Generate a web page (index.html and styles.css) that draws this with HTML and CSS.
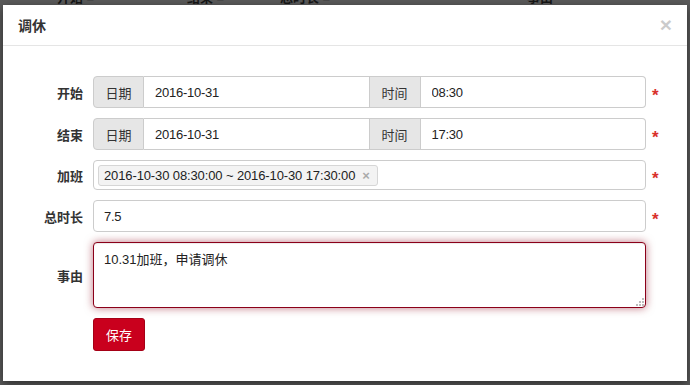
FILE: index.html
```html
<!DOCTYPE html>
<html lang="zh-CN">
<head>
<meta charset="utf-8">
<title>调休</title>
<link rel="stylesheet" href="styles.css">
</head>
<body>
<div class="page">
  <div class="table-head">
    <span class="th th-start">开始 ≡</span>
    <span class="th th-end">结束 ≡</span>
    <span class="th th-total">总时长 ≡</span>
    <span class="th th-reason">事由</span>
  </div>
</div>
<div class="modal">
  <div class="modal-header">
    <h4 class="modal-title">调休</h4>
    <span class="close">×</span>
  </div>
  <div class="modal-body">
    <form class="form">
      <label class="lbl">开始</label>
      <div class="input-group">
        <span class="addon addon-first">日期</span>
        <input class="ctrl" type="text" value="2016-10-31">
        <span class="addon">时间</span>
        <input class="ctrl ctrl-last" type="text" value="08:30">
      </div>
      <span class="req">*</span>

      <label class="lbl">结束</label>
      <div class="input-group">
        <span class="addon addon-first">日期</span>
        <input class="ctrl" type="text" value="2016-10-31">
        <span class="addon">时间</span>
        <input class="ctrl ctrl-last" type="text" value="17:30">
      </div>
      <span class="req">*</span>

      <label class="lbl">加班</label>
      <div class="tagbox">
        <span class="tag">2016-10-30 08:30:00 ~ 2016-10-30 17:30:00<span class="tag-x">×</span></span>
      </div>
      <span class="req">*</span>

      <label class="lbl">总时长</label>
      <input class="single" type="text" value="7.5">
      <span class="req">*</span>

      <label class="lbl">事由</label>
      <div class="ta-wrap">
        <textarea class="ta">10.31加班，申请调休</textarea>
        <svg class="grip" width="9" height="9" viewBox="0 0 9 9"><g fill="#bdbdbd"><rect x="7" y="1" width="2" height="2"/><rect x="4" y="4" width="2" height="2"/><rect x="7" y="4" width="2" height="2"/><rect x="1" y="7" width="2" height="2"/><rect x="4" y="7" width="2" height="2"/><rect x="7" y="7" width="2" height="2"/></g></svg>
      </div>
      <span></span>

      <span></span>
      <div class="actions"><button type="button" class="btn">保存</button></div>
      <span></span>
    </form>
  </div>
</div>
</body>
</html>
```

FILE: styles.css
```css
* { box-sizing: border-box; }
html, body {
  margin: 0;
  padding: 0;
  width: 690px;
  height: 385px;
  overflow: hidden;
  background: #5a5a5a;
  font-family: "Liberation Sans", "Noto Sans CJK SC", sans-serif;
  font-size: 13px;
  color: #333;
}
.page { position: relative; height: 385px; }
.table-head {
  display: flex;
  margin-top: -9px;
  height: 14px;
  line-height: 14px;
  font-weight: bold;
  color: #161616;
}
.th { display: inline-block; }
.th-start { margin-left: 57px; width: 130px; }
.th-end { width: 93px; }
.th-total { width: 247px; }

.modal {
  position: absolute;
  left: 3px;
  top: 5px;
  width: 684px;
  height: 376px;
  background: #fff;
  box-shadow: 0 3px 9px rgba(0,0,0,.5);
}
.modal-header {
  height: 41px;
  padding: 0 15px;
  border-bottom: 1px solid #e5e5e5;
  display: flex;
  align-items: center;
  justify-content: space-between;
}
.modal-title {
  margin: 0;
  font-size: 14px;
  font-weight: bold;
  color: #333;
}
.close {
  font-family: "Liberation Sans", sans-serif;
  font-size: 21px;
  font-weight: bold;
  line-height: 1;
  color: #000;
  opacity: .2;
  margin-top: -2px;
}
.modal-body { padding-top: 30px; }
.form {
  margin: 0;
  display: grid;
  grid-template-columns: 90px 553px 1fr;
  row-gap: 10px;
  align-items: center;
}
.lbl {
  text-align: right;
  padding-right: 10px;
  font-weight: bold;
  color: #333;
}
.req {
  padding-left: 6px;
  color: #d9302c;
  font-weight: bold;
  font-size: 17px;
  line-height: 1;
  padding-top: 6px;
}
.input-group {
  display: flex;
  height: 32px;
}
.addon {
  width: 51px;
  flex: none;
  display: flex;
  align-items: center;
  justify-content: center;
  background: #e6e6e6;
  border: 1px solid #ccc;
  border-left: none;
  color: #333;
}
.addon-first {
  border-left: 1px solid #ccc;
  border-radius: 4px 0 0 4px;
}
.ctrl, .single {
  font-family: inherit;
  font-size: 13px;
  letter-spacing: -0.25px;
  color: #222;
  height: 32px;
  border: 1px solid #ccc;
  border-left: none;
  padding: 0 10px 0 11px;
  outline: none;
  min-width: 0;
  flex: 1;
  background: #fff;
}
.ctrl-last { border-radius: 0 4px 4px 0; }
.single {
  border-left: 1px solid #ccc;
  border-radius: 4px;
  width: 100%;
  padding-left: 10px;
}
.tagbox {
  height: 30px;
  border: 1px solid #ccc;
  border-radius: 4px;
  display: flex;
  align-items: center;
  padding-left: 4px;
}
.tag {
  display: inline-flex;
  align-items: center;
  height: 21px;
  padding: 0 7px 0 5px;
  border: 1px solid #d6d6d6;
  border-radius: 3px;
  background: #f3f3f3;
  color: #222;
  font-size: 13px;
  letter-spacing: -0.12px;
}
.tag-x {
  margin-left: 7px;
  color: #aaa;
  font-weight: bold;
  font-size: 13px;
}
.ta-wrap { position: relative; height: 66px; }
.ta {
  display: block;
  width: 100%;
  height: 66px;
  resize: none;
  border: 1px solid #8b0019;
  border-radius: 4px;
  box-shadow: inset 0 1px 1px rgba(0,0,0,.075), 0 0 8px rgba(139,0,25,.55);
  padding: 6px 10px;
  font-family: inherit;
  font-size: 13px;
  color: #222;
  outline: none;
}
.grip { position: absolute; right: 2px; bottom: 2px; }
.actions { display: flex; }
.btn {
  width: 52px;
  height: 33px;
  background: #c9001d;
  border: 1px solid #a50016;
  border-radius: 3px;
  color: #fff;
  font-family: inherit;
  font-size: 13px;
  padding: 0;
}
```
